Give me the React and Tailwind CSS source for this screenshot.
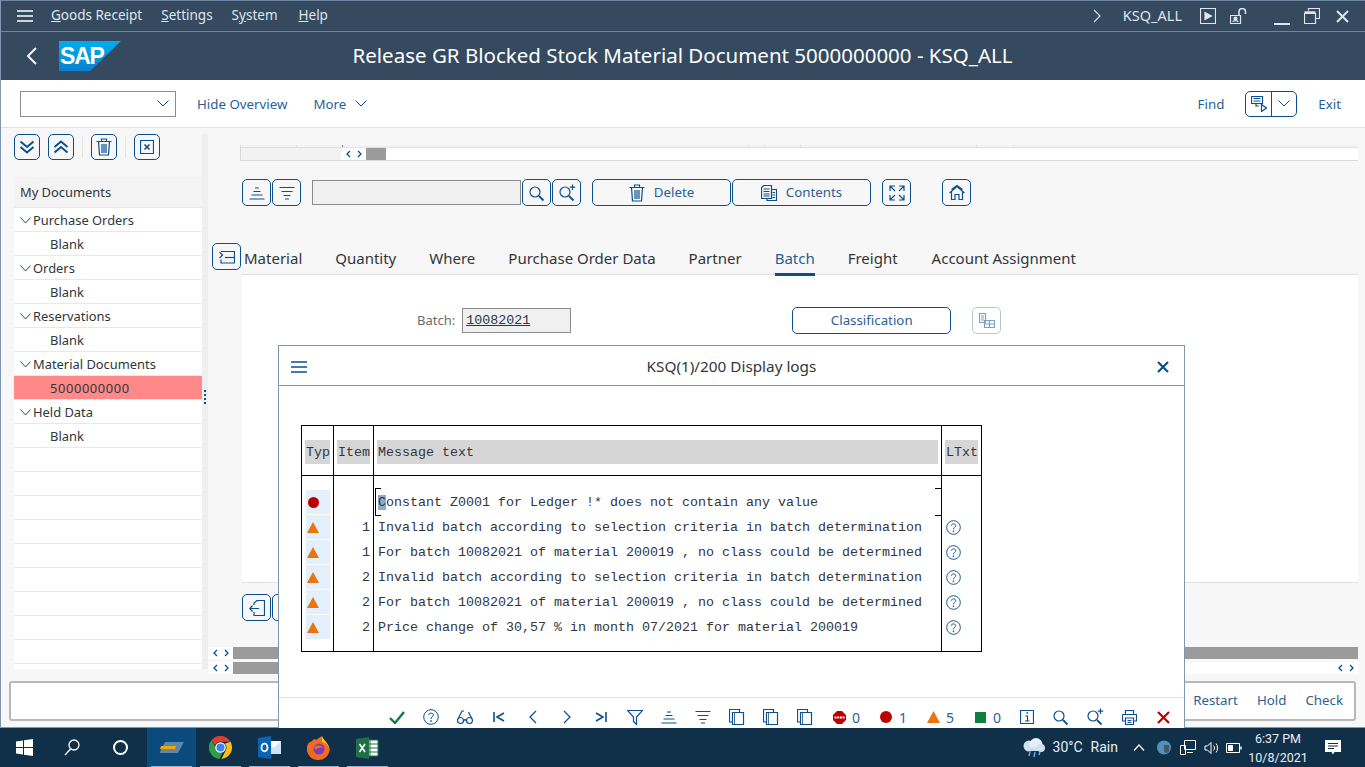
import React from "react";

const B = "#0b4f8f";
const S = ({ w = 16, h = 16, c = B, sw = 1.2, vb, children, className = "" }) => (
  <svg width={w} height={h} viewBox={vb || `0 0 ${w} ${h}`} fill="none" stroke={c} strokeWidth={sw} className={`shrink-0 ${className}`}>
    {children}
  </svg>
);

const Chevron = ({ w = 12, h = 7, c = B, sw = 1 }) => (
  <S w={w} h={h} c={c} sw={sw}><path d={`M0.5 0.5L${w / 2} ${h - 1}L${w - 0.5} 0.5`} /></S>
);
const Asc = () => <S><path d="M6 3H10M4.5 6.5H11.5M2.5 10H13.5M0.5 14H15.5" /></S>;
const Desc = () => <S><path d="M0.5 2.5H15.5M2.5 6.5H13.5M4.5 10.5H11.5M6 14H10" /></S>;
const Search = ({ plus }) => (
  <S w={18} h={18}>
    <circle cx="7" cy="8" r="5" /><path d="M11 12L15.5 16.5" strokeWidth="1.8" />
    {plus && <path d="M14.5 0.5V6M11.8 3.2H17.2" />}
  </S>
);
const Trash = () => (
  <S w={16} h={18}>
    <path d="M0.5 3.5H15.5M5.5 3V1H10.5V3M2.5 3.5L3.5 17H12.5L13.5 3.5M6 6V15M8 6V15M10 6V15" />
  </S>
);
const Help = ({ s = 16 }) => (
  <svg width={s} height={s} viewBox="0 0 16 16" fill="none" stroke={B} strokeWidth="1" className="shrink-0">
    <circle cx="8" cy="8" r="7.3" />
    <path d="M5.6 6C5.8 3.6 10.4 3.6 10.4 6C10.4 7.8 8 7.8 8 10" />
    <circle cx="8" cy="12" r="0.5" />
  </svg>
);
const Copy = () => (
  <S><path d="M10.5 3V0.5H0.5V13H3.5" /><path d="M3.5 3.5H14.5V15.5H3.5Z" /><path d="M5.5 3.5V15.5" strokeWidth="0.8" /></S>
);
const Tri = ({ w = 12, h = 11 }) => (
  <svg width={w} height={h} viewBox="0 0 12 11" className="shrink-0"><path d="M6 0L12 11H0Z" fill="#e8760f" /></svg>
);

const IconBtn = ({ children, className = "" }) => (
  <button className={`w-[29px] h-[27px] border border-[#0b4f8f] rounded-[5px] flex items-center justify-center bg-transparent shrink-0 ${className}`}>
    {children}
  </button>
);
const SmBtn = ({ children, className = "" }) => (
  <button className={`w-[26px] h-[26px] border border-[#0b4f8f] rounded-[5px] flex items-center justify-center bg-transparent shrink-0 ${className}`}>
    {children}
  </button>
);
const TextBtn = ({ children, w = "w-[139px]", className = "" }) => (
  <button className={`${w} h-[27px] border border-[#0b4f8f] rounded-[5px] flex items-center justify-center gap-[9px] text-[13.3px] text-[#2b5f93] shrink-0 ${className}`}>
    {children}
  </button>
);
const Arrows = ({ w = "w-[25px]", className = "" }) => (
  <div className={`${w} h-[12px] bg-white flex items-center justify-center gap-[6px] shrink-0 ${className}`}>
    <S w={5} h={8} sw={1.3}><path d="M4 1L1 4L4 7" /></S>
    <S w={5} h={8} sw={1.3}><path d="M1 1L4 4L1 7" /></S>
  </div>
);

const Menu = ({ pre, u, post, className }) => (
  <span className={className}>{pre}<span className="underline">{u}</span>{post}</span>
);

const tree = [
  ["Purchase Orders", "Blank"],
  ["Orders", "Blank"],
  ["Reservations", "Blank"],
  ["Material Documents", "5000000000"],
  ["Held Data", "Blank"],
];

const Row = ({ children, bg = "bg-white", pl = "pl-[36px]" }) => (
  <div className={`h-[24px] ${bg} ${pl} pt-[2px] border-b border-[#e8e8e8] flex items-center text-[12.9px] text-[#32363a]`}>{children}</div>
);

const tabs = ["Material", "Quantity", "Where", "Purchase Order Data", "Partner", "Batch", "Freight", "Account Assignment"];
const ticks = ["w-[56px] border-[#e0e0e0]", "w-[46px] border-[#777777]", "w-[406px] border-[#e0e0e0]", "w-[16px] border-[#e0e0e0]", "w-[36px] border-[#e0e0e0]", "w-[176px] border-[#e0e0e0]", "w-[37px] border-[#e0e0e0]"];

const msgs = [
  ["", "Constant Z0001 for Ledger !* does not contain any value"],
  ["1", "Invalid batch according to selection criteria in batch determination"],
  ["1", "For batch 10082021 of material 200019 , no class could be determined"],
  ["2", "Invalid batch according to selection criteria in batch determination"],
  ["2", "For batch 10082021 of material 200019 , no class could be determined"],
  ["2", "Price change of 30,57 % in month 07/2021 for material 200019"],
];
const mono = "font-['Liberation_Mono',monospace] text-[13.33px] text-[#32363a]";

const HeadCell = ({ children }) => (
  <div className="h-[50px] border-b border-black flex items-center px-[3px] pt-[3px]">
    <div className="h-[24px] pt-[2px] bg-[#d6d6d6] w-full flex items-center pl-[1px]">{children}</div>
  </div>
);

const Stat = ({ icon, n }) => (
  <div className="w-[47px] h-[16px] pl-[9px] flex items-center gap-[5px] text-[14px] text-[#2b5f93] shrink-0">
    <span className="w-[16px] flex justify-center">{icon}</span>{n}
  </div>
);
const TB = ({ children }) => <div className="w-[34px] h-[16px] flex justify-center items-center shrink-0">{children}</div>;

const TaskApp = ({ children, active }) => (
  <div className={`w-[49px] h-full flex items-center justify-center relative ${active ? "bg-[#0b4a7d]" : ""}`}>
    {children}
    <div className="absolute bottom-0 left-[4px] right-[4px] h-[1px] bg-[#8fb4d0]" />
  </div>
);

export default function App() {
  return (
    <div className="w-[1365px] h-[767px] relative overflow-hidden bg-[#10304a] font-['Noto_Sans',sans-serif]">
      <div className="h-[728px] flex flex-col border-l border-b border-[#7f97b5] bg-[#f7f7f7]">
        {/* menu row */}
        <div className="h-[32px] bg-[#354a5f] border-t border-[#6f87a3] border-b flex items-center text-[13.5px] text-[#dfe6ed] shrink-0">
          <svg width="16" height="12" viewBox="0 0 16 12" fill="none" stroke="#fff" strokeWidth="1.5" className="ml-[16px]">
            <path d="M0 1H16M0 6H16M0 11H16" />
          </svg>
          <Menu className="ml-[18px] mb-[2px]" u="G" post="oods Receipt" />
          <Menu className="ml-[19px] mb-[2px]" u="S" post="ettings" />
          <Menu className="ml-[19px] mb-[2px]" pre="S" u="y" post="stem" />
          <Menu className="ml-[21px] mb-[2px]" u="H" post="elp" />
          <div className="ml-auto flex items-center">
            <S w={8} h={14} c="#dfe6ed"><path d="M1 1L7 7L1 13" /></S>
            <span className="ml-[22px] mb-[1px] text-[14.5px]">KSQ_ALL</span>
            <S w={16} h={16} c="#dfe6ed" className="ml-[18px]"><path d="M0.5 0.5H15.5V15.5H0.5Z" /><path d="M5 4.5L11.5 8L5 11.5Z" fill="#dfe6ed" /></S>
            <S w={17} h={17} c="#dfe6ed" className="ml-[14px]"><path d="M0.5 7.5H10.5V15.5H0.5Z" /><path d="M9 7V3.5C9 -0.5 15.5 -0.5 15.5 3.5V6" strokeWidth="1.5" /><circle cx="5.5" cy="10.5" r="1.5" fill="#dfe6ed" /><path d="M3 14C3 12.2 8 12.2 8 14" /></S>
            <S w={16} h={16} c="#dfe6ed" sw={2} className="ml-[27px] mt-[2px]"><path d="M0 15H16" /></S>
            <S w={16} h={16} c="#dfe6ed" className="ml-[14px]"><path d="M0.5 5.5H11.5V15.5H0.5Z" /><path d="M0.5 4.5H11.5" strokeWidth="2.5" /><path d="M4.5 2.5V0.5H15.5V10.5H12" /></S>
            <S w={13} h={13} c="#dfe6ed" sw={2} className="ml-[16px] mr-[16px]"><path d="M1 1L12 12M12 1L1 12" /></S>
          </div>
        </div>
        {/* title row */}
        <div className="h-[48px] bg-[#354a5f] flex items-center relative shrink-0">
          <S w={10} h={18} c="#eef2f5" sw={2} className="ml-[26px]"><path d="M9 1L1 9L9 17" /></S>
          <svg width="62" height="30" viewBox="0 0 62 30" className="ml-[22px]">
            <defs>
              <linearGradient id="sapg" x1="0" y1="0" x2="0" y2="1">
                <stop offset="0" stopColor="#00aeef" />
                <stop offset="1" stopColor="#0a80d0" />
              </linearGradient>
            </defs>
            <path d="M0 0H62L31 30H0Z" fill="url(#sapg)" />
            <text x="1" y="23" fill="#fff" fontFamily="Liberation Sans" fontWeight="700" fontSize="23" letterSpacing="-1.2">SAP</text>
          </svg>
          <div className="absolute left-0 right-[1px] top-0 bottom-0 pb-[2px] flex items-center justify-center text-[20.5px] text-white pointer-events-none">
            Release GR Blocked Stock Material Document 5000000000 - KSQ_ALL
          </div>
        </div>
        {/* toolbar */}
        <div className="h-[48px] bg-white border-b border-[#e2e2e2] flex items-center text-[13.3px] text-[#2b5f93] shrink-0">
          <div className="ml-[19px] w-[156px] h-[26px] border border-[#8c8c8c] flex items-center justify-end pr-[6px]">
            <Chevron />
          </div>
          <span className="ml-[21px] mt-[2px]">Hide Overview</span>
          <span className="ml-[26px] mt-[2px]">More</span>
          <span className="ml-[9px]"><Chevron /></span>
          <span className="ml-auto mt-[2px]">Find</span>
          <div className="ml-[21px] w-[52px] h-[26px] border border-[#0b4f8f] rounded-[5px] flex">
            <div className="w-[26px] border-r border-[#0b4f8f] flex items-center justify-center">
              <S w={16} h={16}><path d="M0.5 0.5H11.5V7.5H0.5Z" /><path d="M2.5 2.5H9.5M2.5 5H9.5" /><path d="M5 7.5V10H8" /><path d="M10.5 8.5L15.5 12L10.5 15.5Z" /></S>
            </div>
            <div className="flex-1 flex items-center justify-center"><Chevron /></div>
          </div>
          <span className="ml-[21px] mr-[24px] mt-[2px]">Exit</span>
        </div>
        {/* main */}
        <div className="h-[552px] flex shrink-0">
          <div className="w-[201px] pl-[13px] pt-[6px] shrink-0">
            <div className="flex items-center h-[26px]">
              <SmBtn><S w={16} h={14} sw={2}><path d="M1.5 1.5L8 7L14.5 1.5M1.5 7L8 12.5L14.5 7" /></S></SmBtn>
              <SmBtn className="ml-[8px]"><S w={16} h={14} sw={2}><path d="M1.5 7L8 1.5L14.5 7M1.5 12.5L8 7L14.5 12.5" /></S></SmBtn>
              <div className="w-[1px] h-[22px] bg-[#e2e2e2] ml-[8px]" />
              <SmBtn className="ml-[8px]"><Trash /></SmBtn>
              <div className="w-[1px] h-[22px] bg-[#e2e2e2] ml-[8px]" />
              <SmBtn className="ml-[8px]"><S w={14} h={14}><path d="M0.5 0.5H13.5V13.5H0.5Z" /><path d="M4.5 4.5L9.5 9.5M9.5 4.5L4.5 9.5" strokeWidth="1.6" /></S></SmBtn>
            </div>
            <div className="mt-[17px] h-[492px] bg-white w-[188px] flex flex-col overflow-hidden">
              <div className="h-[31px] pt-[2px] bg-[#f3f3f3] border-b border-[#e8e8e8] flex items-center pl-[6px] text-[12.9px] text-[#32363a] shrink-0">My Documents</div>
              {tree.map(([a, b]) => (
                <React.Fragment key={a}>
                  <Row pl="pl-[6px]"><span className="mr-[2px] w-[11px]"><Chevron w={11} h={7} /></span>{a}</Row>
                  <Row bg={b === "Blank" ? "bg-white" : "bg-[#ff8888]"}>
                    <span className={b === "Blank" ? "" : "tracking-[0.6px]"}>{b}</span>
                  </Row>
                </React.Fragment>
              ))}
              {Array.from({ length: 9 }).map((_, i) => <Row key={i}>&nbsp;</Row>)}
            </div>
          </div>
          <div className="w-[6px] mt-[6px] h-[535px] bg-[#efefef] shrink-0 relative">
            <div className="absolute left-[2px] top-[256px] flex flex-col gap-[2px]">
              {[0, 1, 2, 3].map((i) => <div key={i} className="w-[2px] h-[2px] bg-[#0b4f8f]" />)}
            </div>
          </div>
          <div className="flex-1 flex flex-col min-w-0">
            {/* top scroll strip */}
            <div className="mt-[17px] ml-[32px] mr-[7px] h-[16px] border-l border-b border-[#d9d9d9] flex flex-col">
              <div className="h-[3px] border-b border-[#e2e2e2] bg-[#f2f2f2] flex">
                {ticks.map((t, i) => <div key={i} className={`${t} border-r h-full`} />)}
              </div>
              <div className="flex-1 flex">
                <div className="w-[100px] bg-[#f2f2f2]" />
                <Arrows />
                <div className="w-[20px] bg-[#9b9b9b]" />
                <div className="flex-1 bg-white" />
              </div>
            </div>
            {/* buttons */}
            <div className="mt-[18px] ml-[34px] flex items-center">
              <IconBtn><Asc /></IconBtn>
              <IconBtn className="ml-[1px]"><Desc /></IconBtn>
              <div className="ml-[11px] w-[209px] h-[25px] bg-[#f0f0f0] border border-[#8c8c8c]" />
              <IconBtn className="ml-[1px]"><Search /></IconBtn>
              <IconBtn className="ml-[1px]"><Search plus /></IconBtn>
              <TextBtn className="ml-[11px]"><Trash /><span>Delete</span></TextBtn>
              <TextBtn className="ml-[1px]">
                <S w={16} h={16}><path d="M0.5 2.5L3 0.5H10.5V13.5H0.5Z" /><path d="M10.5 4.5H15.5V15.5H6V13.5" /><path d="M2.5 4H8.5M2.5 6.5H8.5M2.5 9H8.5M2.5 11H8.5M11.5 7.5H14M11.5 10H14M11.5 12.5H14" /></S>
                <span>Contents</span>
              </TextBtn>
              <IconBtn className="ml-[11px]">
                <S w={16} h={16}><path d="M6 1H1V6M1 1L6 6M10 1H15V6M15 1L10 6M1 10V15H6M1 15L6 10M15 10V15H10M15 15L10 10" /></S>
              </IconBtn>
              <IconBtn className="ml-[31px]">
                <S w={16} h={15}><path d="M0.5 8L8 1.5L15.5 8M2.5 6.5V14.5H6V9.5H10V14.5H13.5V6.5M2.5 4.5L8 0.5L13.5 4.5" /></S>
              </IconBtn>
            </div>
            {/* tabs */}
            <div className="mt-[37px] ml-[4px] mr-[7px] h-[32px] flex">
              <IconBtn>
                <S w={16} h={14}><path d="M2 1.5H15.5V13H2V9.5" /><path d="M0.5 2L3.5 5L0.5 8" /><path d="M6 7.5H15.5" /></S>
              </IconBtn>
              <div className="flex-1 border-b border-[#e0e0e0] flex gap-[33px] pl-[3px] text-[15px] text-[#32363a]">
                {tabs.map((t) => (
                  <div key={t} className={`h-[32px] pt-[4px] relative ${t === "Batch" ? "text-[#2b5f93]" : ""} ${t === "Account Assignment" ? "ml-[1px]" : ""}`}>
                    {t}
                    {t === "Batch" && <div className="absolute left-0 right-0 bottom-[-1px] h-[3px] bg-[#0b4f8f]" />}
                  </div>
                ))}
              </div>
            </div>
            {/* tab body */}
            <div className="ml-[34px] mr-[7px] h-[308px] bg-white border-b border-[#e0e0e0] pt-[32px] flex items-start">
              <span className="ml-[175px] mt-[4px] text-[13px] text-[#6a6d70]">Batch:</span>
              <div className="ml-[7px] mt-[1px] w-[109px] h-[25px] bg-[#f0f0f0] border border-[#8c8c8c] flex items-center pl-[3px] font-['Liberation_Mono',monospace] text-[13.33px] text-[#32363a] underline">10082021</div>
              <TextBtn w="w-[159px]" className="ml-[221px]">Classification</TextBtn>
              <IconBtn className="ml-[21px] border-[#b5c6d6]">
                <S w={16} h={15} c="#7f9fbc"><path d="M0.5 0.5H6.5V9.5H0.5ZM2 3H5M2 5H5M2 7H5" /><path d="M5.5 7.5H15.5V14.5H5.5ZM5.5 11H15.5M10.5 7.5V14.5" /></S>
              </IconBtn>
            </div>
            <div className="ml-[34px] mt-[11px] flex">
              <IconBtn>
                <S w={16} h={16}><path d="M5 5V3L8 0.5H15.5V15.5H5V12" /><path d="M10 8.5H1M3.5 5.5L0.8 8.5L3.5 11.5" /></S>
              </IconBtn>
              <IconBtn className="ml-[1px]" />
            </div>
            {/* bottom scrollbars */}
            <div className="mt-[26px] flex mr-[7px]">
              <Arrows />
              <div className="flex-1 h-[12px] bg-[#9b9b9b]" />
            </div>
            <div className="mt-[3px] flex mr-[7px]">
              <Arrows />
              <div className="w-[400px] h-[12px] bg-[#9b9b9b]" />
              <div className="flex-1 h-[12px] bg-white flex justify-end">
                <Arrows />
              </div>
            </div>
          </div>
        </div>
        {/* status */}
        <div className="flex-1 pl-[8px] pr-[9px] pt-[1px]">
          <div className="h-[40px] bg-white border-2 border-[#b8b8b8] rounded-[3px] flex items-center justify-end text-[13.3px] text-[#2b5f93] gap-[19px] pr-[11px]">
            <span>Restart</span><span>Hold</span><span>Check</span>
          </div>
        </div>
      </div>

      {/* modal */}
      <div className="absolute left-[278px] top-[345px] w-[907px] h-[383px] bg-white border border-[#7f97b5] border-b-0 flex flex-col">
        <div className="h-[40px] border-b border-[#7f97b5] flex items-center relative shrink-0">
          <S w={16} h={12} sw={1.6} className="ml-[12px] mt-[2px]"><path d="M0 1H16M0 6H16M0 11H16" /></S>
          <div className="absolute inset-0 pt-[2px] flex items-center justify-center text-[15.3px] text-[#32363a]">KSQ(1)/200 Display logs</div>
          <S w={12} h={12} sw={2.2} className="ml-auto mr-[15px] mt-[2px]"><path d="M1 1L11 11M11 1L1 11" /></S>
        </div>
        <div className="h-[312px] border-b border-[#e0e0e0] pt-[39px] pl-[22px] shrink-0">
          <div className={`w-[681px] h-[227px] border border-black flex ${mono}`}>
            <div className="w-[32px] border-r border-black">
              <HeadCell>Typ</HeadCell>
              <div className="pt-[14px] pl-[4px] flex flex-col">
                {msgs.map((_, i) => (
                  <div key={i} className="h-[25px] pb-[1px]">
                    <div className="w-[24px] h-[24px] bg-[#e3f0fc] flex items-center pl-[1px]">
                      {i === 0 ? <div className="ml-[1px] w-[11px] h-[11px] rounded-full bg-[#bb0000]" /> : <Tri />}
                    </div>
                  </div>
                ))}
              </div>
            </div>
            <div className="w-[40px] border-r border-black">
              <HeadCell>Item</HeadCell>
              <div className="pt-[14px] pr-[3px] text-right">
                {msgs.map(([n], i) => <div key={i} className="h-[25px] leading-[25px]">{n}</div>)}
              </div>
            </div>
            <div className="w-[568px] border-r border-black relative">
              <HeadCell>Message text</HeadCell>
              <div className="pt-[14px] pl-[4px]">
                {msgs.map(([, t], i) => (
                  <div key={i} className="h-[25px] leading-[25px] whitespace-pre">
                    {i === 0 ? <><span className="bg-[#92a9c6]">C</span>{t.slice(1)}</> : t}
                  </div>
                ))}
              </div>
              <div className="absolute left-[1px] top-[62px] w-[6px] h-[28px] border-l border-t border-b border-black" />
              <div className="absolute right-0 top-[62px] w-[6px] h-[28px] border-t border-b border-black" />
            </div>
            <div className="flex-1">
              <HeadCell>LTxt</HeadCell>
              <div className="pt-[14px]">
                {msgs.map((_, i) => (
                  <div key={i} className="h-[25px] flex items-center pl-[4px]">{i > 0 && <Help s={15} />}</div>
                ))}
              </div>
            </div>
          </div>
        </div>
        <div className="flex-1 flex items-start pt-[11px] pl-[101px]">
          <TB><S w={16} h={13} c="#107e3e" sw={2.4}><path d="M1 7L6 12L15 1" /></S></TB>
          <TB><Help /></TB>
          <TB><S w={16} h={15}><circle cx="3.5" cy="10.5" r="3" /><circle cx="12.5" cy="10.5" r="3" /><path d="M6.5 10.5C7.5 9.5 8.5 9.5 9.5 10.5M1 9L5 1H7M15 9L11.5 2" /></S></TB>
          <TB><S w={12} h={10} sw={1.6}><path d="M1 0V10M11 1L4 5L11 9" /></S></TB>
          <TB><S w={8} h={14}><path d="M7 1L1 7L7 13" /></S></TB>
          <TB><S w={8} h={14}><path d="M1 1L7 7L1 13" /></S></TB>
          <TB><S w={12} h={10} sw={1.6}><path d="M11 0V10M1 1L8 5L1 9" /></S></TB>
          <TB><S w={16} h={15}><path d="M0.5 0.5H15.5L9.5 7V14.5L6.5 11.5V7Z" /></S></TB>
          <TB><Asc /></TB>
          <TB><Desc /></TB>
          <TB><Copy /></TB>
          <TB><Copy /></TB>
          <TB><Copy /></TB>
          <Stat n="0" icon={
            <svg width="13" height="13" viewBox="0 0 13 13" className="shrink-0">
              <path d="M4 0H9L13 4V9L9 13H4L0 9V4Z" fill="#bb0000" />
              <path d="M1.5 6.5H11.5" stroke="#fff" strokeWidth="2" strokeDasharray="2 0.7" />
            </svg>
          } />
          <Stat n="1" icon={<div className="w-[12px] h-[12px] rounded-full bg-[#bb0000]" />} />
          <Stat n="5" icon={<Tri w={13} h={12} />} />
          <Stat n="0" icon={<div className="w-[11px] h-[11px] bg-[#107e3e]" />} />
          <TB><S w={14} h={14}><path d="M0.5 0.5H13.5V13.5H0.5Z" /><path d="M5.5 6H7.5V11M5 11H9.5" /><path d="M6.5 3H8" strokeWidth="1.6" /></S></TB>
          <TB><Search /></TB>
          <TB><Search plus /></TB>
          <TB><S w={15} h={15}><path d="M3.5 4V0.5H11.5V4M0.5 4.5H14.5V11H11.5M3.5 11H0.5V4.5M3.5 8H11.5V14.5H3.5ZM5.5 10.5H9.5M5.5 12.5H9.5" /></S></TB>
          <TB><S w={13} h={13} c="#bb0000" sw={2.2}><path d="M1 1L12 12M12 1L1 12" /></S></TB>
        </div>
      </div>

      {/* taskbar */}
      <div className="absolute left-0 right-0 top-[728px] h-[39px] bg-[#10304a] flex items-center font-['Roboto',sans-serif] text-[#e8edf2]">
        <svg width="17" height="17" viewBox="0 0 17 17" className="ml-[16px] shrink-0" fill="#fff">
          <path d="M0 2.4L7 1.4V8H0ZM8 1.2L17 0V8H8ZM0 9H7V15.6L0 14.6ZM8 9H17V17L8 15.8Z" />
        </svg>
        <S w={16} h={17} c="#fff" sw={1.3} className="ml-[31px]"><circle cx="10" cy="6" r="5" /><path d="M6.5 10L1 16" /></S>
        <div className="ml-[33px] w-[15px] h-[15px] rounded-full border-2 border-white shrink-0" />
        <div className="ml-[19px] h-full flex shrink-0">
          <TaskApp active>
            <svg width="24" height="11" viewBox="0 0 24 11"><path d="M5 0H24L18 11H0L1 7H14L15 4H3Z" fill="#5f87a8" /><path d="M1 4H16L15 7H0Z" fill="#f0ab00" /></svg>
          </TaskApp>
          <TaskApp>
            <svg width="23" height="23" viewBox="0 0 24 24">
              <path d="M12 0A12 12 0 0 1 22.4 6H12A6 6 0 0 0 6.5 9.5L2.5 4.5A12 12 0 0 1 12 0Z" fill="#e33b2e" />
              <path d="M22.4 6A12 12 0 0 1 13 24L18 14A6 6 0 0 0 16.5 8Z" fill="#fbc116" />
              <path d="M2.5 4.5L7 12A6 6 0 0 0 14 17.5L11 24A12 12 0 0 1 2.5 4.5Z" fill="#2f9e44" />
              <circle cx="12" cy="12" r="5.5" fill="#fff" /><circle cx="12" cy="12" r="4.2" fill="#3f83e8" />
            </svg>
          </TaskApp>
          <TaskApp>
            <svg width="23" height="23" viewBox="0 0 23 23">
              <path d="M9 5H23V18H9Z" fill="#cfe4f7" /><path d="M9 5H23L16 12Z" fill="#fff" />
              <path d="M0 2L13 0V23L0 21Z" fill="#0a64b4" />
              <ellipse cx="6.5" cy="11.5" rx="3" ry="3.8" fill="none" stroke="#fff" strokeWidth="1.8" />
            </svg>
          </TaskApp>
          <TaskApp>
            <svg width="23" height="24" viewBox="0 0 23 24">
              <path d="M11.5 24A11.2 11.2 0 0 1 1.5 7L5 5C7 3 8 2 9 4C11 2 14 1 15 0C15 3 17 4 19 6C22 9 23 12 22.5 15A11.2 11.2 0 0 1 11.5 24Z" fill="#f26a1f" />
              <path d="M15 0C16 4 21 6 22.5 14C21 8 17 6 15 6Z" fill="#ffc22e" />
              <circle cx="12" cy="13" r="5.5" fill="#7a3db8" /><path d="M7 11C10 9 14 9 16 12C13 11 10 12 9 14Z" fill="#f26a1f" />
            </svg>
          </TaskApp>
          <TaskApp>
            <svg width="23" height="22" viewBox="0 0 23 22">
              <path d="M9 3H22V19H9Z" fill="#fff" stroke="#1e7145" />
              <path d="M14 3V19M9 7H22M9 11H22M9 15H22" stroke="#1e7145" />
              <path d="M0 2L13 0V22L0 20Z" fill="#1e7145" />
              <path d="M3.5 7L9 15M9 7L3.5 15" stroke="#fff" strokeWidth="1.6" />
            </svg>
          </TaskApp>
        </div>
        <div className="ml-auto flex items-center">
          <svg width="23" height="20" viewBox="0 0 23 20" className="shrink-0">
            <circle cx="7" cy="8" r="5.5" fill="#cfe0ef" /><circle cx="14" cy="6.5" r="6.5" fill="#e6eff7" /><circle cx="19" cy="10" r="4" fill="#cfe0ef" /><path d="M5 9H20V13H5Z" fill="#cfe0ef" />
            <path d="M8 14L7 18M13 14L12 19M18 14L17 17" stroke="#6fb0e6" strokeWidth="1.4" />
          </svg>
          <span className="ml-[8px] text-[14px]">30°C</span>
          <span className="ml-[8px] text-[14px]">Rain</span>
          <S w={12} h={7} c="#fff" className="ml-[15px]"><path d="M1 6.5L6 1L11 6.5" /></S>
          <svg width="14" height="15" viewBox="0 0 14 15" className="ml-[12px] shrink-0">
            <circle cx="7" cy="7.5" r="7" fill="#4f92bd" /><path d="M7 5H12V11C10 14 8 13 7 11Z" fill="#4a5560" />
          </svg>
          <S w={16} h={15} c="#fff" sw={1} className="ml-[9px]"><path d="M4.5 0.5H15.5V9.5H4.5ZM0.5 5.5H5.5V14.5H0.5V5.5M7 12.5H13" /></S>
          <S w={15} h={14} c="#fff" sw={1} className="ml-[8px]"><path d="M1 5H3.5L7 1.5V12.5L3.5 9H1ZM9.5 4.5C10.8 6 10.8 8 9.5 9.5M12 2.5C14 5 14 9 12 11.5" /></S>
          <S w={16} h={10} c="#fff" sw={1} className="ml-[7px]"><path d="M0.5 0.5H13.5V9.5H0.5Z" /><path d="M2.5 2.5H6.5V7.5H2.5Z" fill="#fff" /><path d="M15 3.5V6.5" strokeWidth="1.5" /></S>
          <div className="ml-[3px] w-[66px] flex flex-col items-center text-[12.5px] leading-[19px]">
            <span>6:37 PM</span><span>10/8/2021</span>
          </div>
          <svg width="16" height="16" viewBox="0 0 16 16" className="ml-[14px] mr-[24px] shrink-0">
            <path d="M0 0H16V12H9.5L8 14.5L6.5 12H0Z" fill="#fff" />
            <path d="M3 3.5H13M3 6H13M3 8.5H9" stroke="#10304a" />
          </svg>
        </div>
      </div>
    </div>
  );
}
